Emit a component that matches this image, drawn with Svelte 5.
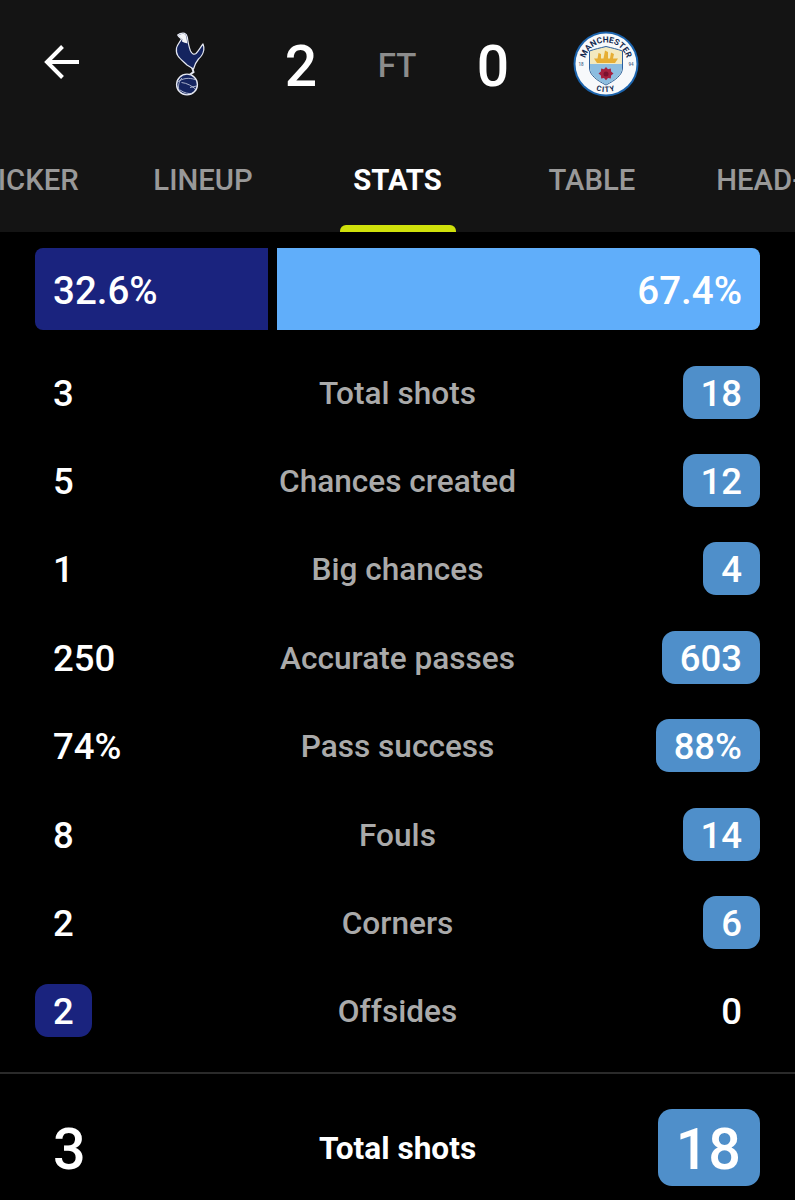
<script>
  const rows = [
    { l: '3', label: 'Total shots', r: '18', win: 'r' },
    { l: '5', label: 'Chances created', r: '12', win: 'r' },
    { l: '1', label: 'Big chances', r: '4', win: 'r' },
    { l: '250', label: 'Accurate passes', r: '603', win: 'r' },
    { l: '74%', label: 'Pass success', r: '88%', win: 'r' },
    { l: '8', label: 'Fouls', r: '14', win: 'r' },
    { l: '2', label: 'Corners', r: '6', win: 'r' },
    { l: '2', label: 'Offsides', r: '0', win: 'l' }
  ];
</script>

<div class="page">
  <header class="head">
    <div class="score-row">
      <svg class="back" viewBox="0 0 36 36" width="36" height="36" aria-label="Back">
        <path d="M35 18H3M18.500 2.500 3 18l15.500 15.500" fill="none" stroke="#fff" stroke-width="4" />
      </svg>
      <svg class="crest spurs" viewBox="0 0 31 64" width="31" height="64" aria-label="Tottenham">
        <path d="M18 35 19.500 40 15.500 43" fill="none" stroke="#e6e9f2" stroke-width="2" />
        <path d="M3.700 3C5.500 1.500 8 1 10.500 1.300 12.500 2 13 3.500 13.300 5 14 10 15 15 16.500 19 18 22 20 23 22 21.500 24.500 19 26.500 15 29 12 29.800 14 30 16 29.800 18 29 22 27 25 24.500 27 22 30 20.500 33 19.500 37L13 33C10 30 6 27 4 24 2.500 22 2 20 2.500 16 3 13 6 10 7.500 7 6 6 4.500 5 3.700 3Z" fill="#14245f" stroke="#e6e9f2" stroke-width="1.200" stroke-linejoin="round" />
        <path d="M4.500 3.500C6 2.200 8.500 1.800 10.300 2.100 11.800 2.800 12.300 4 12.500 5.500L13.300 11.500C11.500 11 10 10.500 8 9.500L8.300 7C6.700 6 5.200 5 4.500 3.500Z" fill="#f4f5f8" />
        <circle cx="13" cy="52.500" r="10.400" fill="#14245f" stroke="#e6e9f2" stroke-width="1.400" />
        <path d="M3.500 50C9 46 15 45.500 21 47.500M5 58C3.700 54 5 49 8 46M7.500 50.500C13 51 18 54 22 57.500M16 55.500 22.500 54M6 58C10 61 15 62 18 61.500" fill="none" stroke="#cdd3e4" stroke-width=".8" />
      </svg>
      <span class="score">2</span>
      <span class="ft">FT</span>
      <span class="score">0</span>
      <svg class="crest" viewBox="0 0 66 66" width="66" height="66" aria-label="Manchester City">
        <defs>
          <path id="arcTop" d="M11.500 33A21.500 21.500 0 0 1 54.500 33" />
          <path id="arcBottom" d="M5 33A28 28 0 0 0 61 33" />
        </defs>
        <circle cx="33" cy="33" r="32.500" fill="#1c64ad" />
        <circle cx="33" cy="33" r="30.500" fill="#f7f9fb" />
        <text class="crest-text"><textPath href="#arcTop" startOffset="50%" text-anchor="middle">MANCHESTER</textPath></text>
        <text class="crest-city"><textPath href="#arcBottom" startOffset="50%" text-anchor="middle">CITY</textPath></text>
        <text class="crest-year" x="8" y="35">18</text>
        <text class="crest-year" x="58" y="35">94</text>
        <path d="M16.500 20C22 18 27 17 33 15.500 39 17 44 18 49.500 20V37C49.500 44 42 49.500 33 54 24 49.500 16.500 44 16.500 37Z" fill="#f3e9bf" stroke="#2a5f9e" stroke-width="1" />
        <path d="M17 33H49V37C49 43.500 42 49 33 53.500 24 49 17 43.500 17 37Z" fill="#8cbde0" />
        <path d="M21 27.500H45L42 32H24ZM24.500 27.500 25.500 22 28 23V27.500ZM30.500 27.500 32 19.500 35 21V27.500ZM37 27.500 38 21.500 41 23 40 27.500Z" fill="#e6ae35" />
        <path d="m33 36 2 2.300 2.800-.7.300 3 2.400 2-2.400 2-.300 3-2.800-.7-2 2.300-2-2.300-2.800.7-.300-3-2.400-2 2.400-2 .300-3 2.800.7Z" fill="#a5213f" />
        <circle cx="33" cy="43" r="2.500" fill="#7a1230" />
      </svg>
    </div>
    <nav class="tabs">
      <div class="tab edge-left">LIVE TICKER</div>
      <div class="tab">LINEUP</div>
      <div class="tab active">STATS<i class="marker"></i></div>
      <div class="tab">TABLE</div>
      <div class="tab edge-right">HEAD-TO-HEAD</div>
    </nav>
  </header>

  <main>
    <div class="possession">
      <div class="poss home" style="width: 233px">32.6%</div>
      <div class="poss away">67.4%</div>
    </div>

    <section class="stats">
      {#each rows as row}
        <div class="row">
          <div class="side"><span class="val" class:navy={row.win === 'l'}>{row.l}</span></div>
          <div class="label">{row.label}</div>
          <div class="side right"><span class="val" class:blue={row.win === 'r'}>{row.r}</span></div>
        </div>
      {/each}
    </section>

    <div class="divider"></div>

    <div class="big-row">
      <div class="side"><span class="big">3</span></div>
      <div class="big-label">Total shots</div>
      <div class="side right"><span class="big blue">18</span></div>
    </div>
  </main>
</div>

<style>
  :global(body) {
    margin: 0;
    background: #000;
  }
  .page {
    width: 795px;
    height: 1200px;
    overflow: hidden;
    background: #000;
    color: #fff;
    font-family: Roboto, "Liberation Sans", sans-serif;
  }
  .head {
    height: 232px;
    background: #141414;
    display: flex;
    flex-direction: column;
  }
  .score-row {
    height: 130px;
    display: grid;
    grid-template-columns: 125px 124px 104px 88px 104px 122px;
    align-items: center;
    justify-items: center;
  }
  .back {
    justify-self: start;
    margin-left: 44px;
    margin-bottom: 6px;
  }
  .crest {
    display: block;
    margin-bottom: 2px;
  }
  .spurs {
    margin-left: 4px;
  }
  .crest-text {
    font: 700 8.4px Roboto, sans-serif;
    fill: #12294f;
  }
  .crest-city {
    font: 700 7.5px Roboto, sans-serif;
    fill: #12294f;
    letter-spacing: 1px;
  }
  .crest-year {
    font: 500 4.5px Roboto, sans-serif;
    fill: #4a6b90;
    text-anchor: middle;
  }
  .score {
    padding-top: 2px;
    font-size: 57px;
    font-weight: 500;
    line-height: 1;
  }
  .ft {
    font-size: 33px;
    font-weight: 500;
    color: #8c8c8c;
  }
  .tabs {
    flex: 1;
    display: grid;
    grid-template-columns: 1fr 194.5px 194.5px 194.5px 1fr;
    min-width: 0;
  }
  .tab {
    position: relative;
    display: flex;
    align-items: center;
    justify-content: center;
    padding-bottom: 2px;
    font-size: 29.3px;
    font-weight: 500;
    color: #999;
    white-space: nowrap;
    overflow: hidden;
    min-width: 0;
  }
  .edge-left {
    justify-content: flex-end;
    padding-right: 27px;
  }
  .edge-right {
    justify-content: flex-start;
    padding-left: 27px;
  }
  .active {
    color: #fff;
    font-weight: 700;
  }
  .marker {
    position: absolute;
    left: 50%;
    bottom: 0;
    width: 116px;
    height: 7px;
    margin-left: -58px;
    border-radius: 6px 6px 0 0;
    background: #cfe00b;
  }
  .possession {
    display: flex;
    gap: 9px;
    height: 82px;
    margin: 16px 35px 0;
    font-size: 38.5px;
    font-weight: 500;
  }
  .poss {
    display: flex;
    align-items: center;
    padding: 2px 18px 0;
    box-sizing: border-box;
  }
  .home {
    background: #1a237e;
    border-radius: 8px 0 0 8px;
  }
  .away {
    flex: 1;
    justify-content: flex-end;
    background: #60aefa;
    border-radius: 0 8px 8px 0;
  }
  .stats {
    margin-top: 18px;
  }
  .row,
  .big-row {
    display: grid;
    grid-template-columns: 1fr auto 1fr;
    align-items: center;
    padding: 0 35px;
  }
  .row {
    height: 88.4px;
  }
  .side {
    display: flex;
  }
  .right {
    justify-content: flex-end;
  }
  .val {
    display: flex;
    align-items: center;
    box-sizing: border-box;
    height: 53px;
    padding: 2px 18px 0;
    border-radius: 13px;
    font-size: 36.5px;
    font-weight: 500;
  }
  .navy {
    background: #1a237e;
  }
  .blue {
    background: #4f8fca;
  }
  .label {
    padding-top: 2px;
    font-size: 31.6px;
    font-weight: 500;
    color: #aaa;
  }
  .divider {
    height: 2px;
    margin-top: 17px;
    background: #2a2a2a;
  }
  .big-row {
    margin-top: 35px;
  }
  .big {
    display: flex;
    align-items: center;
    box-sizing: border-box;
    height: 77px;
    padding: 3px 19px 0 18px;
    border-radius: 14px;
    font-size: 57.5px;
    font-weight: 500;
  }
  .big-label {
    font-size: 31.6px;
    font-weight: 700;
    padding-top: 2px;
  }
</style>
